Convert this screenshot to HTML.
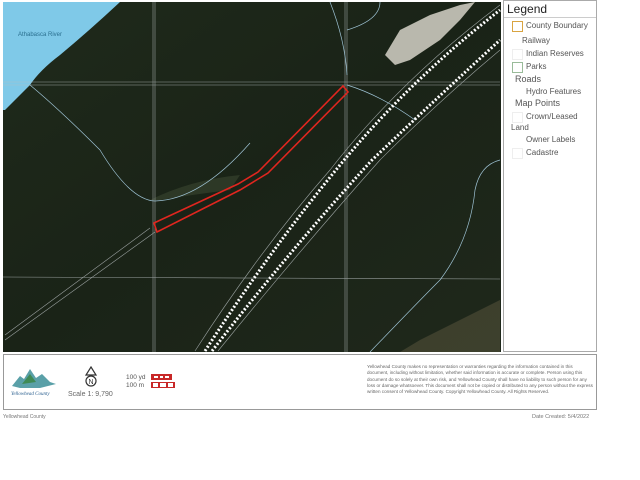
<!DOCTYPE html>
<html><head><meta charset="utf-8"><style>
body{margin:0;width:640px;height:480px;background:#fff;position:relative;overflow:hidden;font-family:"Liberation Sans",sans-serif;}
.abs{position:absolute}
</style></head><body>
<svg class="abs" style="left:3px;top:2px" width="498" height="350" viewBox="3 2 498 350">
<defs>
<linearGradient id="g" x1="0" y1="0" x2="1" y2="1">
<stop offset="0" stop-color="#1f2a1b"/><stop offset="0.5" stop-color="#1a2317"/><stop offset="1" stop-color="#1f281b"/></linearGradient>
</defs>
<rect x="3" y="2" width="498" height="350" fill="url(#g)"/>
<path d="M150 200 Q190 180 240 175 L230 190 Q190 195 160 200Z" fill="#3b4630" opacity="0.6"/>
<path d="M420 340 L500 300 L500 352 L400 352Z" fill="#4a4a35" opacity="0.7"/>
<path d="M3 2 L120 2 Q90 30 60 55 Q40 70 30 85 L5 110 L3 110Z" fill="#7fc9e8"/>
<text x="18" y="36" font-size="6" fill="#2a6f8f">Athabasca River</text>
<path d="M385 55 L400 30 L430 15 L460 5 L475 2 L460 20 L440 40 L410 60 L395 65Z" fill="#b9b8ad"/>
<g stroke="#b8bfc0" stroke-width="0.6" fill="none" opacity="0.8">
<line x1="3" y1="82" x2="500" y2="82"/><line x1="3" y1="85" x2="500" y2="85"/>
<line x1="153" y1="2" x2="153" y2="352"/><line x1="155" y1="2" x2="155" y2="352"/>
<line x1="347" y1="2" x2="347" y2="352"/><line x1="345" y1="2" x2="345" y2="352"/>
<line x1="3" y1="277" x2="500" y2="279"/>
<path d="M5 335 L150 228"/><path d="M5 340 L155 232"/>
<path d="M195 351 Q260 250 330 170 Q400 80 500 5"/>
<path d="M218 351 Q300 250 380 160 Q440 100 500 50"/>
</g>
<g stroke="#9fc4d6" stroke-width="0.7" fill="none">
<path d="M30 85 Q60 110 100 150 Q130 200 155 201 Q200 200 250 143"/>
<path d="M347 85 Q380 95 415 120"/><path d="M347 75 Q345 40 330 2"/><path d="M347 30 Q380 20 380 2"/>
<path d="M370 352 Q420 300 440 280 Q470 240 475 190 Q480 165 500 160"/>
</g>
<g fill="none" stroke-dasharray="2 2">
<path d="M205 351 Q270 250 340 165 Q410 80 500 10" stroke="#fff" stroke-width="3"/>
<path d="M212 351 Q290 250 372 160 Q440 95 500 40" stroke="#fff" stroke-width="3"/>
</g>
<path d="M154 223 L238 184 L258 172 L343 86 L348 92 L268 173 L240 190 L157 232Z" fill="none" stroke="#e0261f" stroke-width="1.6"/>
</svg>
<div class="abs" style="left:503px;top:0;width:94px;height:352px;border:1px solid #aaa;box-sizing:border-box;background:#fff;font-size:8px;color:#555">
<div style="font-size:12px;color:#222;padding:1px 3px;border-bottom:1px solid #ccc">Legend</div>
<div style="position:absolute;left:8px;top:20px;width:9px;height:9px;border:1px solid #d9a441"></div>
<div style="position:absolute;left:22px;top:20px">County Boundary</div>
<div style="position:absolute;left:18px;top:35px">Railway</div>
<div style="position:absolute;left:8px;top:48px;width:9px;height:9px;border:1px solid #eee"></div>
<div style="position:absolute;left:22px;top:48px">Indian Reserves</div>
<div style="position:absolute;left:8px;top:61px;width:9px;height:9px;border:1px solid #9b9"></div>
<div style="position:absolute;left:22px;top:61px">Parks</div>
<div style="position:absolute;left:11px;top:73px;font-size:9px">Roads</div>
<div style="position:absolute;left:22px;top:86px">Hydro Features</div>
<div style="position:absolute;left:11px;top:97px;font-size:9px">Map Points</div>
<div style="position:absolute;left:8px;top:111px;width:9px;height:9px;border:1px solid #eee"></div>
<div style="position:absolute;left:22px;top:111px">Crown/Leased</div>
<div style="position:absolute;left:7px;top:122px">Land</div>
<div style="position:absolute;left:22px;top:134px">Owner Labels</div>
<div style="position:absolute;left:8px;top:147px;width:9px;height:9px;border:1px solid #eee"></div>
<div style="position:absolute;left:22px;top:147px">Cadastre</div>
</div>
<div class="abs" style="left:3px;top:354px;width:594px;height:56px;border:1px solid #999;box-sizing:border-box"></div>
<svg class="abs" style="left:10px;top:366px" width="48" height="30">
<path d="M2 20 L10 10 L14 13 L20 3 L26 12 L32 8 L40 16 L46 18 L30 22 L10 22Z" fill="#5aa0a8"/>
<path d="M12 18 L20 8 L26 16Z" fill="#3f8a55"/>
<text x="1" y="29" font-size="5" fill="#2a5f8f" font-style="italic" font-family="Liberation Serif">Yellowhead County</text>
</svg>
<svg class="abs" style="left:84px;top:366px" width="14" height="24">
<path d="M7 1 L12 9 L2 9Z" fill="none" stroke="#333" stroke-width="1.2"/>
<circle cx="7" cy="15" r="5" fill="none" stroke="#333" stroke-width="1.2"/>
<text x="7" y="18" font-size="7" text-anchor="middle" fill="#333">N</text>
</svg>
<div class="abs" style="left:68px;top:391px;font-size:7px;color:#666">Scale 1: 9,790</div>
<div class="abs" style="left:126px;top:374px;font-size:6.5px;color:#555;line-height:8px">100 yd<br>100 m</div>
<div class="abs" style="left:151px;top:374px;width:21px;height:6px;background:#c82828;border:1px solid #c82828;box-sizing:border-box;display:flex;gap:2px;padding:1px 2px"><i style="background:#fff;flex:1"></i><i style="background:#fff;flex:1"></i><i style="background:#fff;flex:1"></i></div>
<div class="abs" style="left:151px;top:382px;width:24px;height:6px;background:#c82828;box-sizing:border-box;display:flex;gap:2px;padding:1px 2px"><i style="background:#fff;flex:1"></i><i style="background:#fff;flex:1"></i><i style="background:#fff;flex:1"></i></div>
<div class="abs" style="left:367px;top:364px;width:228px;font-size:4.6px;line-height:6.3px;color:#666">Yellowhead County makes no representation or warranties regarding the information contained in this document, including without limitation, whether said information is accurate or complete. Person using this document do so solely at their own risk, and Yellowhead County shall have no liability to such person for any loss or damage whatsoever. This document shall not be copied or distributed to any person without the express written consent of Yellowhead County. Copyright Yellowhead County. All Rights Reserved.</div>
<div class="abs" style="left:3px;top:414px;font-size:5px;color:#777">Yellowhead County</div>
<div class="abs" style="left:532px;top:414px;font-size:5.5px;color:#777">Date Created: 5/4/2022</div>
</body></html>
